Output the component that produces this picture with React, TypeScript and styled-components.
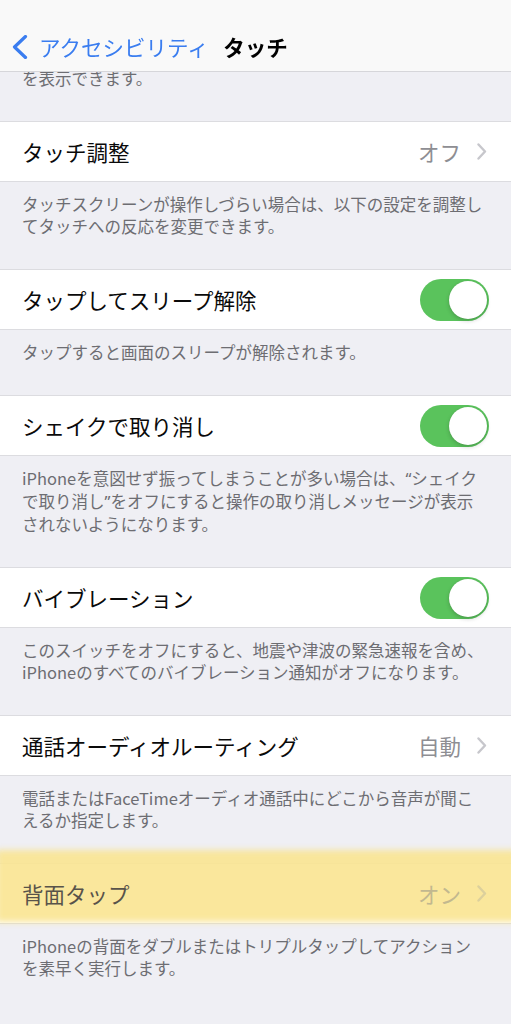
import React from "react";
import styled, { createGlobalStyle } from "styled-components";

const GlobalStyle = createGlobalStyle`
  html, body {
    margin: 0;
    padding: 0;
    background: #efeff4;
  }
  body {
    font-family: "Noto Sans CJK JP", "Noto Sans", sans-serif;
    -webkit-font-smoothing: antialiased;
  }
`;

const Page = styled.div`
  width: 511px;
  min-height: 1024px;
  background: #efeff4;
  overflow: hidden;
`;

const NavBar = styled.header`
  position: sticky;
  top: 0;
  z-index: 5;
  height: 72px;
  box-sizing: border-box;
  padding-top: 22px;
  display: grid;
  grid-template-columns: 1fr auto 1fr;
  align-items: center;
  background: rgba(249, 249, 249, 0.97);
  border-bottom: 1px solid #d6d6da;
`;

const BackButton = styled.div`
  display: flex;
  align-items: center;
  gap: 11px;
  padding-left: 12px;
  height: 44px;
  color: #3a7df0;
  font-size: 21.5px;
  white-space: nowrap;
`;

const Title = styled.div`
  height: 44px;
  display: flex;
  align-items: center;
  font-size: 21.5px;
  font-weight: 700;
  color: #000;
`;

const Footer = styled.div<{ $first?: boolean }>`
  padding: ${(p) => (p.$first ? "0" : "11px")} 22px 32px 22px;
  margin-top: ${(p) => (p.$first ? "-5px" : "0")};
  font-size: 16.5px;
  line-height: 22px;
  color: #6d6d72;
  white-space: nowrap;
`;

const Quote = styled.span`
  font-family: "Noto Sans", sans-serif;
`;

const RowWrap = styled.div`
  position: relative;
`;

const Row = styled.div`
  height: 59px;
  display: flex;
  align-items: center;
  justify-content: space-between;
  padding: 0 22px;
  background: #fff;
  border-top: 1px solid #dcdce0;
  border-bottom: 1px solid #dcdce0;
`;

const Label = styled.div<{ $muted?: boolean }>`
  position: relative;
  z-index: 2;
  font-size: 21.5px;
  color: ${(p) => (p.$muted ? "#58534a" : "#0a0a0a")};
  white-space: nowrap;
`;

const Accessory = styled.div`
  position: relative;
  z-index: 2;
  display: flex;
  align-items: center;
  gap: 16px;
  margin-right: 2px;
`;

const Value = styled.div<{ $muted?: boolean }>`
  font-size: 21.5px;
  color: ${(p) => (p.$muted ? "#c2b88f" : "#8e8e93")};
  white-space: nowrap;
`;

const Switch = styled.div`
  width: 69px;
  height: 42px;
  border-radius: 21px;
  background: #5ac35c;
  display: flex;
  align-items: center;
  justify-content: flex-end;
  padding: 2px;
  box-sizing: border-box;
`;

const Knob = styled.div`
  width: 38px;
  height: 38px;
  border-radius: 50%;
  background: #fff;
  box-shadow: 0 2px 4px rgba(0, 0, 0, 0.18), 0 0 1px rgba(0, 0, 0, 0.15);
`;

const Highlight = styled.div`
  position: absolute;
  z-index: 1;
  left: -4px;
  right: -6px;
  top: -13px;
  bottom: 2px;
  background: rgba(250, 228, 145, 0.9);
  filter: blur(3px);
  pointer-events: none;
`;

const Chevron = ({ muted }: { muted?: boolean }) => (
  <svg width="10" height="17" viewBox="0 0 10 17">
    <path
      d="M1.5 1.5 L8 8.5 L1.5 15.5"
      fill="none"
      stroke={muted ? "#dcd09c" : "#c7c7cc"}
      strokeWidth="2.4"
      strokeLinecap="round"
      strokeLinejoin="round"
    />
  </svg>
);

const BackChevron = () => (
  <svg width="16" height="24" viewBox="0 0 16 24">
    <path
      d="M13.5 1.5 L2.5 12 L13.5 22.5"
      fill="none"
      stroke="#3a7df0"
      strokeWidth="3.2"
      strokeLinecap="round"
      strokeLinejoin="round"
    />
  </svg>
);

type Item = {
  label: string;
  value?: string;
  toggle?: boolean;
  highlight?: boolean;
  footer: React.ReactNode[];
};

const items: Item[] = [
  {
    label: "タッチ調整",
    value: "オフ",
    footer: [
      "タッチスクリーンが操作しづらい場合は、以下の設定を調整し",
      "てタッチへの反応を変更できます。",
    ],
  },
  {
    label: "タップしてスリープ解除",
    toggle: true,
    footer: ["タップすると画面のスリープが解除されます。"],
  },
  {
    label: "シェイクで取り消し",
    toggle: true,
    footer: [
      <>
        iPhoneを意図せず振ってしまうことが多い場合は、<Quote>“</Quote>シェイク
      </>,
      <>
        で取り消し<Quote>”</Quote>をオフにすると操作の取り消しメッセージが表示
      </>,
      "されないようになります。",
    ],
  },
  {
    label: "バイブレーション",
    toggle: true,
    footer: [
      "このスイッチをオフにすると、地震や津波の緊急速報を含め、",
      "iPhoneのすべてのバイブレーション通知がオフになります。",
    ],
  },
  {
    label: "通話オーディオルーティング",
    value: "自動",
    footer: [
      "電話またはFaceTimeオーディオ通話中にどこから音声が聞こ",
      "えるか指定します。",
    ],
  },
  {
    label: "背面タップ",
    value: "オン",
    highlight: true,
    footer: [
      "iPhoneの背面をダブルまたはトリプルタップしてアクション",
      "を素早く実行します。",
    ],
  },
];

const FooterText = ({ lines, first }: { lines: React.ReactNode[]; first?: boolean }) => (
  <Footer $first={first}>
    {lines.map((l, i) => (
      <React.Fragment key={i}>
        {i > 0 && <br />}
        {l}
      </React.Fragment>
    ))}
  </Footer>
);

export default function App() {
  return (
    <Page>
      <GlobalStyle />
      <NavBar>
        <BackButton>
          <BackChevron />
          <span>アクセシビリティ</span>
        </BackButton>
        <Title>タッチ</Title>
        <div />
      </NavBar>
      <FooterText first lines={["を表示できます。"]} />
      {items.map((it) => (
        <React.Fragment key={it.label}>
          <RowWrap>
            {it.highlight && <Highlight />}
            <Row>
              <Label $muted={it.highlight}>{it.label}</Label>
              {it.toggle ? (
                <Switch>
                  <Knob />
                </Switch>
              ) : (
                <Accessory>
                  <Value $muted={it.highlight}>{it.value}</Value>
                  <Chevron muted={it.highlight} />
                </Accessory>
              )}
            </Row>
          </RowWrap>
          <FooterText lines={it.footer} />
        </React.Fragment>
      ))}
    </Page>
  );
}
